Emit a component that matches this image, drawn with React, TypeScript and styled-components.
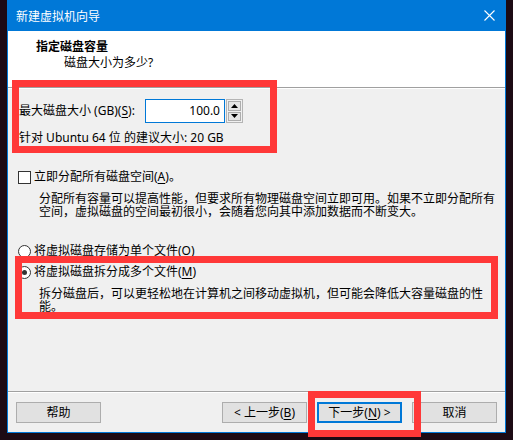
import React from "react";
import styled, { createGlobalStyle } from "styled-components";

const Global = createGlobalStyle`
  html, body { margin: 0; padding: 0; background: #1c0a14; }
  body { font-family: "Noto Sans", "Noto Sans CJK SC", sans-serif; font-size: 12px; color: #000; }
`;

const Page = styled.div`
  position: relative;
  width: 513px;
  height: 440px;
  background: #1c0a14;
  padding-left: 7px;
  box-sizing: border-box;
  overflow: hidden;
`;

const Window = styled.div`
  width: 499px;
  height: 433px;
  box-sizing: border-box;
  border: 1px solid #0078d7;
  border-top: none;
  display: flex;
  flex-direction: column;
  background: #f0f0f0;
`;

const TitleBar = styled.div`
  height: 31px;
  flex: none;
  background: #0078d7;
  display: flex;
  align-items: center;
  justify-content: space-between;
  padding: 0 10px 0 8px;
  color: #fff;
  font-size: 12px;
`;

const Header = styled.div`
  height: 56px;
  flex: none;
  background: #fff;
  padding: 8px 0 0 28px;
  box-sizing: border-box;
  line-height: 16px;
`;

const HeaderTitle = styled.div`
  font-weight: bold;
`;

const HeaderSub = styled.div`
  padding-left: 28px;
`;

const Body = styled.div`
  flex: 1;
  border-top: 1px solid #a0a0a0;
  box-shadow: inset 0 1px 0 #fff;
  padding: 11px 0 0 0;
  display: flex;
  flex-direction: column;
  line-height: 16px;
`;

const SizeRow = styled.div`
  display: flex;
  align-items: center;
  height: 24px;
  padding-left: 11px;
`;

const SizeLabel = styled.span`
  width: 126px;
  flex: none;
`;

const NumberField = styled.div`
  width: 80px;
  height: 24px;
  box-sizing: border-box;
  border: 1px solid #0078d7;
  background: #fff;
  text-align: right;
  padding-right: 4px;
  line-height: 22px;
`;

const Spinner = styled.div`
  margin-left: 1px;
  width: 17px;
  height: 24px;
  box-sizing: border-box;
  border: 1px solid #b4b4b4;
  display: flex;
  flex-direction: column;
  padding: 1px;
  gap: 1px;
`;

const SpinBtn = styled.div`
  flex: 1;
  background: #e6e6e6;
  border: 1px solid #adadad;
  display: flex;
  align-items: center;
  justify-content: center;
`;

const Hint = styled.div`
  margin-top: 7px;
  padding-left: 11px;
`;

const OptionRow = styled.div<{ $mt: number }>`
  margin-top: ${(p) => p.$mt}px;
  padding-left: 10px;
  display: flex;
  align-items: center;
  gap: 3px;
  height: 16px;
`;

const CheckBox = styled.span`
  width: 13px;
  height: 13px;
  box-sizing: border-box;
  border: 1px solid #333;
  background: #fff;
  flex: none;
`;

const Radio = styled.span<{ $on?: boolean }>`
  width: 13px;
  height: 13px;
  box-sizing: border-box;
  border: 1px solid #333;
  border-radius: 50%;
  background: #fff;
  flex: none;
  display: flex;
  align-items: center;
  justify-content: center;
  &::after {
    content: "";
    width: 5px;
    height: 5px;
    border-radius: 50%;
    background: ${(p) => (p.$on ? "#333" : "transparent")};
  }
`;

const Desc = styled.div`
  margin-top: 7px;
  margin-left: 31px;
  width: 458px;
  line-height: 13px;
`;

const U = styled.span`
  text-decoration: underline;
  text-underline-offset: 2px;
`;

const Footer = styled.div`
  height: 41px;
  flex: none;
  box-sizing: border-box;
  border-top: 1px solid #a0a0a0;
  box-shadow: inset 0 1px 0 #fff;
  padding: 10px 8px 0 8px;
  display: flex;
  align-items: flex-start;
  gap: 10px;
`;

const Spacer = styled.div`
  flex: 1;
`;

const Button = styled.div<{ $def?: boolean }>`
  width: 85px;
  height: 21px;
  box-sizing: border-box;
  border: ${(p) => (p.$def ? "2px solid #0078d7" : "1px solid #adadad")};
  background: #e1e1e1;
  display: flex;
  align-items: center;
  justify-content: center;
  line-height: 16px;
`;

const RedBox = styled.div<{ $x: number; $y: number; $w: number; $h: number; $t: number }>`
  position: absolute;
  left: ${(p) => p.$x}px;
  top: ${(p) => p.$y}px;
  width: ${(p) => p.$w}px;
  height: ${(p) => p.$h}px;
  box-sizing: border-box;
  border: ${(p) => p.$t}px solid #ff3838;
  pointer-events: none;
`;

export default function App() {
  return (
    <>
      <Global />
      <Page>
        <Window>
          <TitleBar>
            <span>新建虚拟机向导</span>
            <svg width="11" height="11" viewBox="0 0 11 11">
              <path d="M0.5 0.5 L10.5 10.5 M10.5 0.5 L0.5 10.5" stroke="#fff" strokeWidth="1.1" />
            </svg>
          </TitleBar>
          <Header>
            <HeaderTitle>指定磁盘容量</HeaderTitle>
            <HeaderSub>磁盘大小为多少?</HeaderSub>
          </Header>
          <Body>
            <SizeRow>
              <SizeLabel>
                最大磁盘大小 (GB)(<U>S</U>):
              </SizeLabel>
              <NumberField>100.0</NumberField>
              <Spinner>
                <SpinBtn>
                  <svg width="7" height="4" viewBox="0 0 7 4">
                    <path d="M3.5 0 L7 4 L0 4 Z" fill="#000" />
                  </svg>
                </SpinBtn>
                <SpinBtn>
                  <svg width="7" height="4" viewBox="0 0 7 4">
                    <path d="M0 0 L7 0 L3.5 4 Z" fill="#000" />
                  </svg>
                </SpinBtn>
              </Spinner>
            </SizeRow>
            <Hint>针对 Ubuntu 64 位 的建议大小: 20 GB</Hint>
            <OptionRow $mt={23}>
              <CheckBox />
              <span>
                立即分配所有磁盘空间(<U>A</U>)。
              </span>
            </OptionRow>
            <Desc>
              分配所有容量可以提高性能，但要求所有物理磁盘空间立即可用。如果不立即分配所有空间，虚拟磁盘的空间最初很小，会随着您向其中添加数据而不断变大。
            </Desc>
            <OptionRow $mt={25}>
              <Radio />
              <span>
                将虚拟磁盘存储为单个文件(<U>O</U>)
              </span>
            </OptionRow>
            <OptionRow $mt={5}>
              <Radio $on />
              <span>
                将虚拟磁盘拆分成多个文件(<U>M</U>)
              </span>
            </OptionRow>
            <Desc>
              拆分磁盘后，可以更轻松地在计算机之间移动虚拟机，但可能会降低大容量磁盘的性能。
            </Desc>
          </Body>
          <Footer>
            <Button>帮助</Button>
            <Spacer />
            <Button>
              &lt; 上一步(<U>B</U>)
            </Button>
            <Button $def>
              下一步(<U>N</U>) &gt;
            </Button>
            <Button>取消</Button>
          </Footer>
        </Window>
        <RedBox $x={12} $y={80} $w={265} $h={73} $t={7} />
        <RedBox $x={15} $y={256} $w={483} $h={63} $t={7} />
        <RedBox $x={308} $y={391} $w={113} $h={46} $t={7} />
      </Page>
    </>
  );
}
